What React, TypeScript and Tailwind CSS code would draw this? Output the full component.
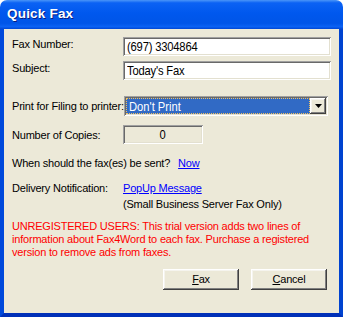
import React from 'react'

const FONT = { fontFamily: '"Liberation Sans", Arial, sans-serif' }

// classic Win sunken edge
const sunken =
  'shadow-[inset_1px_1px_#a0a0a0,inset_-1px_-1px_#ffffff,inset_2px_2px_#696969,inset_-2px_-2px_#e3e0d0]'
const raised =
  'shadow-[inset_-1px_-1px_#404040,inset_1px_1px_#ffffff,inset_-2px_-2px_#808080,inset_2px_2px_#f5f4ee]'

// field text is a tall narrow face in the shot; squeeze Liberation Sans to match
const fieldText = 'text-[13px] leading-[15px] whitespace-nowrap inline-block scale-x-[0.86] origin-left'

function Label({ children }: { children: React.ReactNode }) {
  return (
    <div className="w-[111px] shrink-0 text-[11px] leading-[14px] text-black whitespace-nowrap tracking-[-0.2px]">
      {children}
    </div>
  )
}

function TextBox({ value }: { value: string }) {
  return (
    <div className={`w-[208px] h-[19px] bg-white ${sunken} pl-[4px] flex items-center`}>
      <span className={`${fieldText} text-black`}>{value}</span>
    </div>
  )
}

export default function App() {
  return (
    <div className="w-[343px] h-[317px] flex flex-col select-none" style={FONT}>
      {/* title bar */}
      <div className="h-[29px] shrink-0 rounded-t-[7px] bg-[linear-gradient(180deg,#4a95f8_0%,#0b62f4_10%,#0058ee_45%,#0055e8_80%,#0b62f4_92%,#0046d4_100%)] flex items-center pl-[7px]">
        <span className="text-white font-bold text-[13.5px] tracking-[0.2px] [text-shadow:1px_1px_#0a1e80]">
          Quick Fax
        </span>
      </div>

      {/* client area with blue frame */}
      <div className="flex-1 flex flex-col bg-[#ece9d8] border-l-[4px] border-r-[4px] border-b-[4px] border-l-[#0049db] border-r-[#0043d0] border-b-[#0030b8] pl-[8px] pt-[8px] tracking-[-0.2px]">
        <div className="flex items-start">
          <Label>Fax Number:</Label>
          <TextBox value="(697) 3304864" />
        </div>

        <div className="flex items-start mt-[5px]">
          <Label>Subject:</Label>
          <TextBox value="Today's Fax" />
        </div>

        <div className="flex items-center mt-[16px]">
          <Label>Print for Filing to printer:</Label>
          <div className={`ml-[1px] w-[204px] h-[20px] bg-white ${sunken} p-[2px] flex`}>
            <div className="flex-1 bg-[#316ac5] border border-dotted border-[#f0c060] flex items-center pl-[2px]">
              <span className={`${fieldText} text-white tracking-normal`}>Don't Print</span>
            </div>
            <div className={`w-[16px] bg-[#ece9d8] ${raised} flex items-center justify-center`}>
              <svg width="7" height="4" viewBox="0 0 7 4">
                <path d="M0 0h7L3.5 4z" fill="#000" />
              </svg>
            </div>
          </div>
        </div>

        <div className="flex items-center mt-[9px]">
          <Label>Number of Copies:</Label>
          <div className={`w-[80px] h-[19px] bg-[#ece9d8] ${sunken} flex items-center justify-center`}>
            <span className="text-[13px] leading-[15px] text-black scale-x-[0.86] inline-block">0</span>
          </div>
        </div>

        <div className="flex items-center mt-[12px] h-[14px] text-[11px] text-black">
          <span>When should the fax(es) be sent?</span>
          <span className="ml-[8px] text-[#0000ff] underline">Now</span>
        </div>

        <div className="flex mt-[10px] text-[11px] leading-[16px] text-black">
          <div className="w-[111px] shrink-0">Delivery Notification:</div>
          <div className="flex flex-col">
            <span className="text-[#0000ff] underline">PopUp Message</span>
            <span>(Small Business Server Fax Only)</span>
          </div>
        </div>

        <p className="mt-[8px] pr-[10px] text-[11px] leading-[13px] text-[#ff0000]">
          UNREGISTERED USERS: This trial version adds two lines of information about Fax4Word to each fax.
          Purchase a registered version to remove ads from faxes.
        </p>

        <div className="flex justify-end gap-[12px] mt-[10px] pr-[12px]">
          <button className={`w-[76px] h-[21px] bg-[#ece9d8] ${raised} text-[11px] text-black`}>
            <span className="underline">F</span>ax
          </button>
          <button className={`w-[76px] h-[21px] bg-[#ece9d8] ${raised} text-[11px] text-black`}>
            <span className="underline">C</span>ancel
          </button>
        </div>
      </div>
    </div>
  )
}
